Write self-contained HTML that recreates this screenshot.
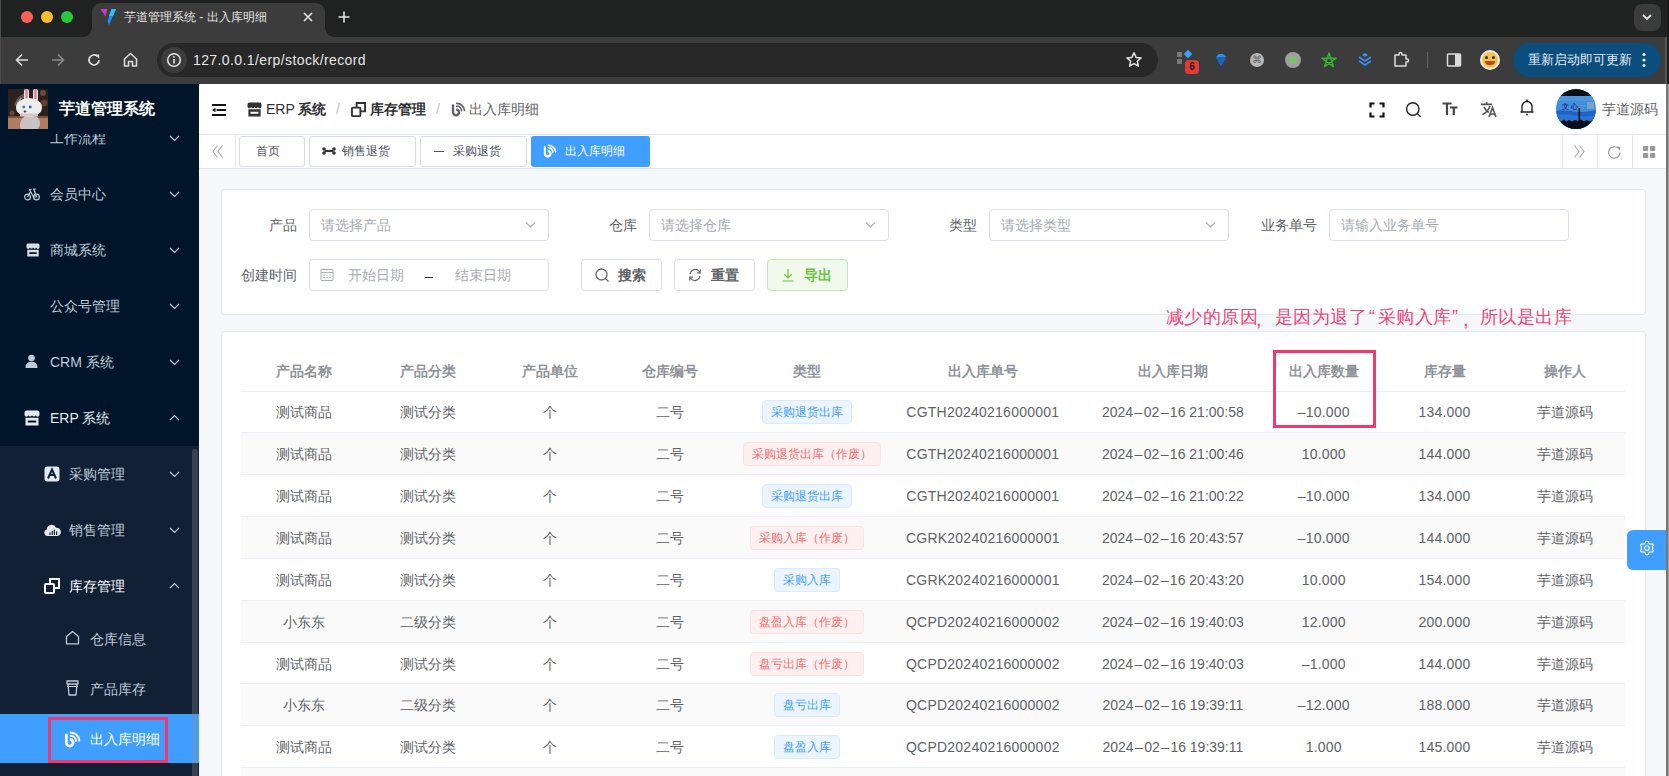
<!DOCTYPE html>
<html><head><meta charset="utf-8">
<style>
*{box-sizing:border-box;margin:0;padding:0}
html,body{width:1669px;height:776px;overflow:hidden;background:#f5f7f9;font-family:"Liberation Sans",sans-serif}
.abs{position:absolute}
/* browser chrome */
#tabstrip{position:absolute;left:0;top:0;width:1669px;height:37px;background:#202121}
#toolbar{position:absolute;left:0;top:37px;width:1669px;height:47px;background:#3c3c3c}
/* sidebar */
#side{position:absolute;left:0;top:84px;width:200px;height:692px;background:#001529;overflow:hidden}
.mi{position:absolute;left:0;width:200px;height:56px;color:#bfcbd9;font-size:14px;line-height:56px}
/* header */
#hdr{position:absolute;left:200px;top:84px;width:1466px;height:50px;background:#fff;border-bottom:1px solid #e4e7ed}
#tags{position:absolute;left:200px;top:134px;width:1466px;height:35px;background:#fff;border-bottom:1px solid #e4e7ed}
#edge{position:absolute;left:1666px;top:84px;width:3px;height:692px;background:#3a3a3a}
</style></head>
<body>
<div id="tabstrip">
  <div class="abs" style="left:21px;top:11px;width:12px;height:12px;border-radius:50%;background:#fe5f57"></div>
  <div class="abs" style="left:41px;top:11px;width:12px;height:12px;border-radius:50%;background:#febc2e"></div>
  <div class="abs" style="left:61px;top:11px;width:12px;height:12px;border-radius:50%;background:#28c840"></div>
  <div class="abs" style="left:92px;top:3px;width:233px;height:34px;background:#3c3c3c;border-radius:9px 9px 0 0"></div><div class="abs" style="left:83px;top:28px;width:9px;height:9px;background:radial-gradient(circle at 0 0,#202121 8.5px,#3c3c3c 9px)"></div><div class="abs" style="left:325px;top:28px;width:9px;height:9px;background:radial-gradient(circle at 100% 0,#202121 8.5px,#3c3c3c 9px)"></div>
  <svg class="abs" style="left:99px;top:8px" width="18" height="18" viewBox="0 0 18 18"><path d="M1.5 1 H8.5 L6.5 8.5 Z" fill="#c63bc4"/><path d="M12.5 1 H17 L10 17 L8.5 13 Z" fill="#1e8ff0"/><path d="M12.5 1 H17 L14 8 H10 Z" fill="#27c3f5"/></svg>
  <div class="abs" style="left:124px;top:9px;font-size:12px;line-height:16px;color:#e6e6e6">芋道管理系统 - 出入库明细</div>
  <svg class="abs" style="left:302px;top:11px" width="12" height="12" viewBox="0 0 12 12"><path d="M2 2 L10 10 M10 2 L2 10" stroke="#e6e6e6" stroke-width="1.6"/></svg>
  <svg class="abs" style="left:337px;top:10px" width="14" height="14" viewBox="0 0 14 14"><path d="M7 1.5 V12.5 M1.5 7 H12.5" stroke="#e6e6e6" stroke-width="1.6"/></svg>
  <div class="abs" style="left:1634px;top:4px;width:27px;height:27px;border-radius:8px;background:#3c3c3c"></div>
  <svg class="abs" style="left:1641px;top:12px" width="12" height="10" viewBox="0 0 12 10"><path d="M2 3 L6 7 L10 3" stroke="#e6e6e6" stroke-width="1.8" fill="none"/></svg>
</div>
<div id="toolbar">
  <svg class="abs" style="left:14px;top:15px" width="16" height="16" viewBox="0 0 16 16"><path d="M14 8 H2.5 M8 2.5 L2.5 8 L8 13.5" stroke="#dcdcdc" stroke-width="1.6" fill="none"/></svg>
  <svg class="abs" style="left:50px;top:15px" width="16" height="16" viewBox="0 0 16 16"><path d="M2 8 H13.5 M8 2.5 L13.5 8 L8 13.5" stroke="#8a8a8a" stroke-width="1.6" fill="none"/></svg>
  <svg class="abs" style="left:86px;top:15px" width="16" height="16" viewBox="0 0 16 16"><path d="M13 8 A5 5 0 1 1 11.5 4.4" stroke="#dcdcdc" stroke-width="1.7" fill="none"/><path d="M9 2.5 L13.2 2.5 L13.2 6.7 Z" fill="#dcdcdc"/></svg>
  <svg class="abs" style="left:122px;top:14px" width="17" height="17" viewBox="0 0 17 17"><path d="M2.5 8 L8.5 2.5 L14.5 8 V15 H10.5 V10.5 H6.5 V15 H2.5 Z" stroke="#dcdcdc" stroke-width="1.6" fill="none" stroke-linejoin="round"/></svg>
  <div class="abs" style="left:157px;top:6px;width:1001px;height:34px;border-radius:17px;background:#282828"></div>
  <div class="abs" style="left:161px;top:10px;width:26px;height:26px;border-radius:50%;background:#3c3c3c"></div>
  <svg class="abs" style="left:166px;top:15px" width="16" height="16" viewBox="0 0 16 16"><circle cx="8" cy="8" r="6.3" stroke="#e6e6e6" stroke-width="1.5" fill="none"/><path d="M8 7 V11.5" stroke="#e6e6e6" stroke-width="1.6"/><circle cx="8" cy="4.8" r="0.9" fill="#e6e6e6"/></svg>
  <div class="abs" style="left:193px;top:14px;font-size:14px;line-height:18px;color:#e6e6e6;letter-spacing:0.4px">127.0.0.1/erp/stock/record</div>
  <svg class="abs" style="left:1125px;top:14px" width="18" height="18" viewBox="0 0 18 18"><path d="M9 1.8 L11.1 6.4 L16.1 6.9 L12.3 10.2 L13.4 15.2 L9 12.6 L4.6 15.2 L5.7 10.2 L1.9 6.9 L6.9 6.4 Z" stroke="#e6e6e6" stroke-width="1.5" fill="none" stroke-linejoin="round"/></svg>
  <!-- extensions -->
  <div class="abs" style="left:1177px;top:15px;width:5px;height:5px;background:#777"></div>
  <div class="abs" style="left:1177px;top:22px;width:5px;height:5px;background:#777"></div>
  <div class="abs" style="left:1185px;top:14px;width:6px;height:6px;background:#3aa0ff;transform:rotate(45deg)"></div>
  <div class="abs" style="left:1185px;top:23px;width:14px;height:14px;border-radius:4px;background:#e53935;color:#222;font-size:10px;line-height:14px;text-align:center;font-weight:bold">6</div>
  <svg class="abs" style="left:1213px;top:15px" width="16" height="16" viewBox="0 0 16 16"><path d="M3 5 L6 2 H10 L13 5 L8 14 Z" fill="#2f8ff0"/><path d="M3 5 H13 L8 14 Z" fill="#1565c0"/></svg>
  <div class="abs" style="left:1250px;top:16px;width:14px;height:14px;border-radius:50%;background:#b8b8b8;color:#666;font-size:10px;line-height:14px;text-align:center">⌘</div>
  <div class="abs" style="left:1285px;top:15px;width:16px;height:16px;border-radius:50%;background:#9e9e9e"></div>
  <div class="abs" style="left:1289px;top:19px;width:8px;height:8px;border-radius:50%;background:#7cc26a"></div>
  <svg class="abs" style="left:1320px;top:14px" width="18" height="18" viewBox="0 0 18 18"><path d="M9.00 2.00 L13.41 15.57 L1.87 7.18 L16.13 7.18 L4.59 15.57 L9.00 2.00 Z" stroke="#2fb52f" stroke-width="1.5" fill="none" stroke-linejoin="round"/></svg>
  <svg class="abs" style="left:1356px;top:15px" width="18" height="16" viewBox="0 0 18 16"><path d="M3 5 L9 9 L15 5 M3 9 L9 13 L15 9" stroke="#3b8cf5" stroke-width="1.7" fill="none"/><path d="M6 3 L9 1 L12 3 L9 5 Z" fill="#3b8cf5"/></svg>
  <svg class="abs" style="left:1392px;top:14px" width="18" height="18" viewBox="0 0 18 18"><path d="M3 4 H7 V3 A1.5 1.5 0 0 1 10 3 V4 H14 V8 H15 A1.5 1.5 0 0 1 15 11 H14 V15 H3 Z" stroke="#dcdcdc" stroke-width="1.5" fill="none" stroke-linejoin="round"/></svg>
  <div class="abs" style="left:1427px;top:15px;width:1px;height:16px;background:#666"></div>
  <svg class="abs" style="left:1446px;top:15px" width="16" height="16" viewBox="0 0 16 16"><rect x="1.5" y="2" width="13" height="12" rx="1" stroke="#dcdcdc" stroke-width="1.5" fill="none"/><rect x="9" y="2" width="5.5" height="12" fill="#dcdcdc"/></svg>
  <div class="abs" style="left:1480px;top:13px;width:20px;height:20px;border-radius:50%;background:#f0f0f0"></div>
  <div class="abs" style="left:1482px;top:15px;width:16px;height:16px;border-radius:50%;background:#f3c24a"></div><div class="abs" style="left:1485px;top:24px;width:10px;height:4px;border-radius:0 0 5px 5px;background:#b44a2a"></div><div class="abs" style="left:1485px;top:19px;width:3px;height:3px;border-radius:50%;background:#333"></div><div class="abs" style="left:1492px;top:19px;width:3px;height:3px;border-radius:50%;background:#333"></div>
  <div class="abs" style="left:1513px;top:6px;width:148px;height:34px;border-radius:17px;background:#0b4d7d"></div>
  <div class="abs" style="left:1528px;top:14px;font-size:13px;line-height:18px;color:#e8eef5">重新启动即可更新</div>
  <svg class="abs" style="left:1640px;top:14px" width="8" height="18" viewBox="0 0 8 18"><circle cx="4" cy="3.5" r="1.6" fill="#e8eef5"/><circle cx="4" cy="9" r="1.6" fill="#e8eef5"/><circle cx="4" cy="14.5" r="1.6" fill="#e8eef5"/></svg>
</div>


<div class="abs" style="left:199px;top:169px;width:1467px;height:607px;background:#f5f7f9"></div>
<div class="abs" style="left:221px;top:189px;width:1425px;height:126px;background:#fff;border:1px solid #e4e7ed;border-radius:4px"></div>
<div class="abs" style="left:-3px;top:215.0px;width:300px;text-align:right;font-size:14px;line-height:20px;color:#606266;font-weight:normal;white-space:nowrap;">产品</div>
<div class="abs" style="left:309px;top:209px;width:240px;height:32px;background:#fff;border:1px solid #dcdfe6;border-radius:4px"></div>
<div class="abs" style="left:321px;top:215.0px;font-size:14px;line-height:20px;color:#a8abb2;font-weight:normal;white-space:nowrap;">请选择产品</div>
<svg class="abs" style="left:525px;top:221px" width="11" height="8" viewBox="0 0 11 8"><path d="M1 1.5 L5.5 6 L10 1.5" stroke="#a8abb2" stroke-width="1.1" fill="none"/></svg>
<div class="abs" style="left:337px;top:215.0px;width:300px;text-align:right;font-size:14px;line-height:20px;color:#606266;font-weight:normal;white-space:nowrap;">仓库</div>
<div class="abs" style="left:649px;top:209px;width:240px;height:32px;background:#fff;border:1px solid #dcdfe6;border-radius:4px"></div>
<div class="abs" style="left:661px;top:215.0px;font-size:14px;line-height:20px;color:#a8abb2;font-weight:normal;white-space:nowrap;">请选择仓库</div>
<svg class="abs" style="left:865px;top:221px" width="11" height="8" viewBox="0 0 11 8"><path d="M1 1.5 L5.5 6 L10 1.5" stroke="#a8abb2" stroke-width="1.1" fill="none"/></svg>
<div class="abs" style="left:677px;top:215.0px;width:300px;text-align:right;font-size:14px;line-height:20px;color:#606266;font-weight:normal;white-space:nowrap;">类型</div>
<div class="abs" style="left:989px;top:209px;width:240px;height:32px;background:#fff;border:1px solid #dcdfe6;border-radius:4px"></div>
<div class="abs" style="left:1001px;top:215.0px;font-size:14px;line-height:20px;color:#a8abb2;font-weight:normal;white-space:nowrap;">请选择类型</div>
<svg class="abs" style="left:1205px;top:221px" width="11" height="8" viewBox="0 0 11 8"><path d="M1 1.5 L5.5 6 L10 1.5" stroke="#a8abb2" stroke-width="1.1" fill="none"/></svg>
<div class="abs" style="left:1017px;top:215.0px;width:300px;text-align:right;font-size:14px;line-height:20px;color:#606266;font-weight:normal;white-space:nowrap;">业务单号</div>
<div class="abs" style="left:1329px;top:209px;width:240px;height:32px;background:#fff;border:1px solid #dcdfe6;border-radius:4px"></div>
<div class="abs" style="left:1341px;top:215.0px;font-size:14px;line-height:20px;color:#a8abb2;font-weight:normal;white-space:nowrap;">请输入业务单号</div>
<div class="abs" style="left:-3px;top:265.0px;width:300px;text-align:right;font-size:14px;line-height:20px;color:#606266;font-weight:normal;white-space:nowrap;">创建时间</div>
<div class="abs" style="left:309px;top:259px;width:240px;height:32px;background:#fff;border:1px solid #dcdfe6;border-radius:4px"></div>
<svg class="abs" style="left:320px;top:268px" width="14" height="14" viewBox="0 0 14 14"><rect x="1" y="1.5" width="12" height="11" rx="1" stroke="#a8abb2" stroke-width="1" fill="none"/><path d="M1 4.5 H13 M3.5 7 H5 M6.3 7 H7.8 M9 7 H10.5 M3.5 9.5 H5 M6.3 9.5 H7.8 M9 9.5 H10.5" stroke="#a8abb2" stroke-width="0.9"/></svg>
<div class="abs" style="left:348px;top:265.0px;font-size:14px;line-height:20px;color:#a8abb2;font-weight:normal;white-space:nowrap;">开始日期</div>
<div class="abs" style="left:425px;top:266.0px;font-size:14px;line-height:20px;color:#303133;font-weight:normal;white-space:nowrap;">–</div>
<div class="abs" style="left:455px;top:265.0px;font-size:14px;line-height:20px;color:#a8abb2;font-weight:normal;white-space:nowrap;">结束日期</div>
<div class="abs" style="left:581px;top:259px;width:81px;height:32px;background:#fff;border:1px solid #dcdfe6;border-radius:4px"></div>
<div class="abs" style="left:618px;top:265.0px;font-size:14px;line-height:20px;color:#606266;font-weight:bold;white-space:nowrap;">搜索</div>
<svg class="abs" style="left:595px;top:268px" width="14" height="14" viewBox="0 0 14 14"><circle cx="6.5" cy="6.5" r="5.5" stroke="#606266" stroke-width="1.3" fill="none"/><path d="M10.5 10.5 L13.5 13.5" stroke="#606266" stroke-width="1.3"/></svg>
<div class="abs" style="left:674px;top:259px;width:81px;height:32px;background:#fff;border:1px solid #dcdfe6;border-radius:4px"></div>
<div class="abs" style="left:711px;top:265.0px;font-size:14px;line-height:20px;color:#606266;font-weight:bold;white-space:nowrap;">重置</div>
<svg class="abs" style="left:688px;top:268px" width="14" height="14" viewBox="0 0 14 14"><path d="M2.2 6 A5 5 0 0 1 11.5 4 M11.8 8 A5 5 0 0 1 2.5 10" stroke="#606266" stroke-width="1.2" fill="none"/><path d="M12.3 1.5 V4.8 H9" stroke="#606266" stroke-width="1.2" fill="none"/><path d="M1.7 12.5 V9.2 H5" stroke="#606266" stroke-width="1.2" fill="none"/></svg>
<div class="abs" style="left:767px;top:259px;width:81px;height:32px;background:#f0f9eb;border:1px solid #c2e7b0;border-radius:4px"></div>
<div class="abs" style="left:804px;top:265.0px;font-size:14px;line-height:20px;color:#67c23a;font-weight:bold;white-space:nowrap;">导出</div>
<svg class="abs" style="left:781px;top:268px" width="14" height="14" viewBox="0 0 14 14"><path d="M7 1 V10 M3.2 6.3 L7 10 L10.8 6.3 M1.5 13 H12.5" stroke="#67c23a" stroke-width="1.2" fill="none"/></svg>
<div class="abs" style="left:1166px;top:305.0px;font-size:18px;line-height:24px;color:#ee4379;font-weight:normal;white-space:nowrap;letter-spacing:0.4px">减少的原因</div>
<div class="abs" style="left:1256px;top:307.0px;font-size:20px;line-height:24px;color:#ee4379;font-weight:normal;white-space:nowrap;">,</div>
<div class="abs" style="left:1275px;top:305.0px;font-size:18px;line-height:24px;color:#ee4379;font-weight:normal;white-space:nowrap;letter-spacing:0.4px">是因为退了</div>
<div class="abs" style="left:1369px;top:305.0px;font-size:18px;line-height:24px;color:#ee4379;font-weight:normal;white-space:nowrap;">“</div>
<div class="abs" style="left:1378px;top:305.0px;font-size:18px;line-height:24px;color:#ee4379;font-weight:normal;white-space:nowrap;letter-spacing:0.4px">采购入库</div>
<div class="abs" style="left:1452px;top:305.0px;font-size:18px;line-height:24px;color:#ee4379;font-weight:normal;white-space:nowrap;">”</div>
<div class="abs" style="left:1463px;top:307.0px;font-size:20px;line-height:24px;color:#ee4379;font-weight:normal;white-space:nowrap;">,</div>
<div class="abs" style="left:1480px;top:305.0px;font-size:18px;line-height:24px;color:#ee4379;font-weight:normal;white-space:nowrap;letter-spacing:0.4px">所以是出库</div>
<div class="abs" style="left:221px;top:331px;width:1425px;height:460px;background:#fff;border:1px solid #e4e7ed;border-radius:4px"></div>
<div class="abs" style="left:153.8px;top:361.0px;width:300px;text-align:center;font-size:14px;line-height:20px;color:#909399;font-weight:bold;white-space:nowrap;">产品名称</div>
<div class="abs" style="left:278.2px;top:361.0px;width:300px;text-align:center;font-size:14px;line-height:20px;color:#909399;font-weight:bold;white-space:nowrap;">产品分类</div>
<div class="abs" style="left:399.6px;top:361.0px;width:300px;text-align:center;font-size:14px;line-height:20px;color:#909399;font-weight:bold;white-space:nowrap;">产品单位</div>
<div class="abs" style="left:520.4px;top:361.0px;width:300px;text-align:center;font-size:14px;line-height:20px;color:#909399;font-weight:bold;white-space:nowrap;">仓库编号</div>
<div class="abs" style="left:657.2px;top:361.0px;width:300px;text-align:center;font-size:14px;line-height:20px;color:#909399;font-weight:bold;white-space:nowrap;">类型</div>
<div class="abs" style="left:832.8px;top:361.0px;width:300px;text-align:center;font-size:14px;line-height:20px;color:#909399;font-weight:bold;white-space:nowrap;">出入库单号</div>
<div class="abs" style="left:1022.9000000000001px;top:361.0px;width:300px;text-align:center;font-size:14px;line-height:20px;color:#909399;font-weight:bold;white-space:nowrap;">出入库日期</div>
<div class="abs" style="left:1173.7px;top:361.0px;width:300px;text-align:center;font-size:14px;line-height:20px;color:#909399;font-weight:bold;white-space:nowrap;">出入库数量</div>
<div class="abs" style="left:1294.5px;top:361.0px;width:300px;text-align:center;font-size:14px;line-height:20px;color:#909399;font-weight:bold;white-space:nowrap;">库存量</div>
<div class="abs" style="left:1414.9px;top:361.0px;width:300px;text-align:center;font-size:14px;line-height:20px;color:#909399;font-weight:bold;white-space:nowrap;">操作人</div>
<div class="abs" style="left:241px;top:390.5px;width:1384px;height:1px;background:#ebeef5"></div>
<div class="abs" style="left:241px;top:432.35px;width:1384px;height:1px;background:#ebeef5"></div>
<div class="abs" style="left:153.8px;top:402.425px;width:300px;text-align:center;font-size:14px;line-height:20px;color:#606266;font-weight:normal;white-space:nowrap;">测试商品</div>
<div class="abs" style="left:278.2px;top:402.425px;width:300px;text-align:center;font-size:14px;line-height:20px;color:#606266;font-weight:normal;white-space:nowrap;">测试分类</div>
<div class="abs" style="left:399.6px;top:402.425px;width:300px;text-align:center;font-size:14px;line-height:20px;color:#606266;font-weight:normal;white-space:nowrap;">个</div>
<div class="abs" style="left:520.4px;top:402.425px;width:300px;text-align:center;font-size:14px;line-height:20px;color:#606266;font-weight:normal;white-space:nowrap;">二号</div>
<div class="abs" style="left:762.2px;top:400.425px;width:90px;height:24px;background:#ecf5ff;border:1px solid #d9ecff;border-radius:4px;color:#409eff;font-size:12px;line-height:22px;text-align:center;white-space:nowrap">采购退货出库</div>
<div class="abs" style="left:832.8px;top:402.425px;width:300px;text-align:center;font-size:14px;line-height:20px;color:#606266;font-weight:normal;white-space:nowrap;letter-spacing:0.24px">CGTH20240216000001</div>
<div class="abs" style="left:1022.9000000000001px;top:402.425px;width:300px;text-align:center;font-size:14px;line-height:20px;color:#606266;font-weight:normal;white-space:nowrap;">2024<span style="margin:0 1.4px">–</span>02<span style="margin:0 1.4px">–</span>16 21:00:58</div>
<div class="abs" style="left:1173.7px;top:402.425px;width:300px;text-align:center;font-size:14px;line-height:20px;color:#606266;font-weight:normal;white-space:nowrap;letter-spacing:0.2px">–10.000</div>
<div class="abs" style="left:1294.5px;top:402.425px;width:300px;text-align:center;font-size:14px;line-height:20px;color:#606266;font-weight:normal;white-space:nowrap;letter-spacing:0.2px">134.000</div>
<div class="abs" style="left:1414.9px;top:402.425px;width:300px;text-align:center;font-size:14px;line-height:20px;color:#606266;font-weight:normal;white-space:nowrap;">芋道源码</div>
<div class="abs" style="left:241px;top:433.35px;width:1384px;height:40.85px;background:#fafafa"></div>
<div class="abs" style="left:241px;top:474.20000000000005px;width:1384px;height:1px;background:#ebeef5"></div>
<div class="abs" style="left:153.8px;top:444.27500000000003px;width:300px;text-align:center;font-size:14px;line-height:20px;color:#606266;font-weight:normal;white-space:nowrap;">测试商品</div>
<div class="abs" style="left:278.2px;top:444.27500000000003px;width:300px;text-align:center;font-size:14px;line-height:20px;color:#606266;font-weight:normal;white-space:nowrap;">测试分类</div>
<div class="abs" style="left:399.6px;top:444.27500000000003px;width:300px;text-align:center;font-size:14px;line-height:20px;color:#606266;font-weight:normal;white-space:nowrap;">个</div>
<div class="abs" style="left:520.4px;top:444.27500000000003px;width:300px;text-align:center;font-size:14px;line-height:20px;color:#606266;font-weight:normal;white-space:nowrap;">二号</div>
<div class="abs" style="left:743.4px;top:442.27500000000003px;width:138px;height:24px;background:#fef0f0;border:1px solid #fde2e2;border-radius:4px;color:#f56c6c;font-size:12px;line-height:22px;text-align:center;white-space:nowrap">采购退货出库（作废）</div>
<div class="abs" style="left:832.8px;top:444.27500000000003px;width:300px;text-align:center;font-size:14px;line-height:20px;color:#606266;font-weight:normal;white-space:nowrap;letter-spacing:0.24px">CGTH20240216000001</div>
<div class="abs" style="left:1022.9000000000001px;top:444.27500000000003px;width:300px;text-align:center;font-size:14px;line-height:20px;color:#606266;font-weight:normal;white-space:nowrap;">2024<span style="margin:0 1.4px">–</span>02<span style="margin:0 1.4px">–</span>16 21:00:46</div>
<div class="abs" style="left:1173.7px;top:444.27500000000003px;width:300px;text-align:center;font-size:14px;line-height:20px;color:#606266;font-weight:normal;white-space:nowrap;letter-spacing:0.2px">10.000</div>
<div class="abs" style="left:1294.5px;top:444.27500000000003px;width:300px;text-align:center;font-size:14px;line-height:20px;color:#606266;font-weight:normal;white-space:nowrap;letter-spacing:0.2px">144.000</div>
<div class="abs" style="left:1414.9px;top:444.27500000000003px;width:300px;text-align:center;font-size:14px;line-height:20px;color:#606266;font-weight:normal;white-space:nowrap;">芋道源码</div>
<div class="abs" style="left:241px;top:516.05px;width:1384px;height:1px;background:#ebeef5"></div>
<div class="abs" style="left:153.8px;top:486.125px;width:300px;text-align:center;font-size:14px;line-height:20px;color:#606266;font-weight:normal;white-space:nowrap;">测试商品</div>
<div class="abs" style="left:278.2px;top:486.125px;width:300px;text-align:center;font-size:14px;line-height:20px;color:#606266;font-weight:normal;white-space:nowrap;">测试分类</div>
<div class="abs" style="left:399.6px;top:486.125px;width:300px;text-align:center;font-size:14px;line-height:20px;color:#606266;font-weight:normal;white-space:nowrap;">个</div>
<div class="abs" style="left:520.4px;top:486.125px;width:300px;text-align:center;font-size:14px;line-height:20px;color:#606266;font-weight:normal;white-space:nowrap;">二号</div>
<div class="abs" style="left:762.2px;top:484.125px;width:90px;height:24px;background:#ecf5ff;border:1px solid #d9ecff;border-radius:4px;color:#409eff;font-size:12px;line-height:22px;text-align:center;white-space:nowrap">采购退货出库</div>
<div class="abs" style="left:832.8px;top:486.125px;width:300px;text-align:center;font-size:14px;line-height:20px;color:#606266;font-weight:normal;white-space:nowrap;letter-spacing:0.24px">CGTH20240216000001</div>
<div class="abs" style="left:1022.9000000000001px;top:486.125px;width:300px;text-align:center;font-size:14px;line-height:20px;color:#606266;font-weight:normal;white-space:nowrap;">2024<span style="margin:0 1.4px">–</span>02<span style="margin:0 1.4px">–</span>16 21:00:22</div>
<div class="abs" style="left:1173.7px;top:486.125px;width:300px;text-align:center;font-size:14px;line-height:20px;color:#606266;font-weight:normal;white-space:nowrap;letter-spacing:0.2px">–10.000</div>
<div class="abs" style="left:1294.5px;top:486.125px;width:300px;text-align:center;font-size:14px;line-height:20px;color:#606266;font-weight:normal;white-space:nowrap;letter-spacing:0.2px">134.000</div>
<div class="abs" style="left:1414.9px;top:486.125px;width:300px;text-align:center;font-size:14px;line-height:20px;color:#606266;font-weight:normal;white-space:nowrap;">芋道源码</div>
<div class="abs" style="left:241px;top:517.05px;width:1384px;height:40.85px;background:#fafafa"></div>
<div class="abs" style="left:241px;top:557.9px;width:1384px;height:1px;background:#ebeef5"></div>
<div class="abs" style="left:153.8px;top:527.9749999999999px;width:300px;text-align:center;font-size:14px;line-height:20px;color:#606266;font-weight:normal;white-space:nowrap;">测试商品</div>
<div class="abs" style="left:278.2px;top:527.9749999999999px;width:300px;text-align:center;font-size:14px;line-height:20px;color:#606266;font-weight:normal;white-space:nowrap;">测试分类</div>
<div class="abs" style="left:399.6px;top:527.9749999999999px;width:300px;text-align:center;font-size:14px;line-height:20px;color:#606266;font-weight:normal;white-space:nowrap;">个</div>
<div class="abs" style="left:520.4px;top:527.9749999999999px;width:300px;text-align:center;font-size:14px;line-height:20px;color:#606266;font-weight:normal;white-space:nowrap;">二号</div>
<div class="abs" style="left:750.2px;top:525.9749999999999px;width:114px;height:24px;background:#fef0f0;border:1px solid #fde2e2;border-radius:4px;color:#f56c6c;font-size:12px;line-height:22px;text-align:center;white-space:nowrap">采购入库（作废）</div>
<div class="abs" style="left:832.8px;top:527.9749999999999px;width:300px;text-align:center;font-size:14px;line-height:20px;color:#606266;font-weight:normal;white-space:nowrap;letter-spacing:0.24px">CGRK20240216000001</div>
<div class="abs" style="left:1022.9000000000001px;top:527.9749999999999px;width:300px;text-align:center;font-size:14px;line-height:20px;color:#606266;font-weight:normal;white-space:nowrap;">2024<span style="margin:0 1.4px">–</span>02<span style="margin:0 1.4px">–</span>16 20:43:57</div>
<div class="abs" style="left:1173.7px;top:527.9749999999999px;width:300px;text-align:center;font-size:14px;line-height:20px;color:#606266;font-weight:normal;white-space:nowrap;letter-spacing:0.2px">–10.000</div>
<div class="abs" style="left:1294.5px;top:527.9749999999999px;width:300px;text-align:center;font-size:14px;line-height:20px;color:#606266;font-weight:normal;white-space:nowrap;letter-spacing:0.2px">144.000</div>
<div class="abs" style="left:1414.9px;top:527.9749999999999px;width:300px;text-align:center;font-size:14px;line-height:20px;color:#606266;font-weight:normal;white-space:nowrap;">芋道源码</div>
<div class="abs" style="left:241px;top:599.75px;width:1384px;height:1px;background:#ebeef5"></div>
<div class="abs" style="left:153.8px;top:569.8249999999999px;width:300px;text-align:center;font-size:14px;line-height:20px;color:#606266;font-weight:normal;white-space:nowrap;">测试商品</div>
<div class="abs" style="left:278.2px;top:569.8249999999999px;width:300px;text-align:center;font-size:14px;line-height:20px;color:#606266;font-weight:normal;white-space:nowrap;">测试分类</div>
<div class="abs" style="left:399.6px;top:569.8249999999999px;width:300px;text-align:center;font-size:14px;line-height:20px;color:#606266;font-weight:normal;white-space:nowrap;">个</div>
<div class="abs" style="left:520.4px;top:569.8249999999999px;width:300px;text-align:center;font-size:14px;line-height:20px;color:#606266;font-weight:normal;white-space:nowrap;">二号</div>
<div class="abs" style="left:774.2px;top:567.8249999999999px;width:66px;height:24px;background:#ecf5ff;border:1px solid #d9ecff;border-radius:4px;color:#409eff;font-size:12px;line-height:22px;text-align:center;white-space:nowrap">采购入库</div>
<div class="abs" style="left:832.8px;top:569.8249999999999px;width:300px;text-align:center;font-size:14px;line-height:20px;color:#606266;font-weight:normal;white-space:nowrap;letter-spacing:0.24px">CGRK20240216000001</div>
<div class="abs" style="left:1022.9000000000001px;top:569.8249999999999px;width:300px;text-align:center;font-size:14px;line-height:20px;color:#606266;font-weight:normal;white-space:nowrap;">2024<span style="margin:0 1.4px">–</span>02<span style="margin:0 1.4px">–</span>16 20:43:20</div>
<div class="abs" style="left:1173.7px;top:569.8249999999999px;width:300px;text-align:center;font-size:14px;line-height:20px;color:#606266;font-weight:normal;white-space:nowrap;letter-spacing:0.2px">10.000</div>
<div class="abs" style="left:1294.5px;top:569.8249999999999px;width:300px;text-align:center;font-size:14px;line-height:20px;color:#606266;font-weight:normal;white-space:nowrap;letter-spacing:0.2px">154.000</div>
<div class="abs" style="left:1414.9px;top:569.8249999999999px;width:300px;text-align:center;font-size:14px;line-height:20px;color:#606266;font-weight:normal;white-space:nowrap;">芋道源码</div>
<div class="abs" style="left:241px;top:600.75px;width:1384px;height:40.85px;background:#fafafa"></div>
<div class="abs" style="left:241px;top:641.6px;width:1384px;height:1px;background:#ebeef5"></div>
<div class="abs" style="left:153.8px;top:611.675px;width:300px;text-align:center;font-size:14px;line-height:20px;color:#606266;font-weight:normal;white-space:nowrap;">小东东</div>
<div class="abs" style="left:278.2px;top:611.675px;width:300px;text-align:center;font-size:14px;line-height:20px;color:#606266;font-weight:normal;white-space:nowrap;">二级分类</div>
<div class="abs" style="left:399.6px;top:611.675px;width:300px;text-align:center;font-size:14px;line-height:20px;color:#606266;font-weight:normal;white-space:nowrap;">个</div>
<div class="abs" style="left:520.4px;top:611.675px;width:300px;text-align:center;font-size:14px;line-height:20px;color:#606266;font-weight:normal;white-space:nowrap;">二号</div>
<div class="abs" style="left:750.2px;top:609.675px;width:114px;height:24px;background:#fef0f0;border:1px solid #fde2e2;border-radius:4px;color:#f56c6c;font-size:12px;line-height:22px;text-align:center;white-space:nowrap">盘盈入库（作废）</div>
<div class="abs" style="left:832.8px;top:611.675px;width:300px;text-align:center;font-size:14px;line-height:20px;color:#606266;font-weight:normal;white-space:nowrap;letter-spacing:0.24px">QCPD20240216000002</div>
<div class="abs" style="left:1022.9000000000001px;top:611.675px;width:300px;text-align:center;font-size:14px;line-height:20px;color:#606266;font-weight:normal;white-space:nowrap;">2024<span style="margin:0 1.4px">–</span>02<span style="margin:0 1.4px">–</span>16 19:40:03</div>
<div class="abs" style="left:1173.7px;top:611.675px;width:300px;text-align:center;font-size:14px;line-height:20px;color:#606266;font-weight:normal;white-space:nowrap;letter-spacing:0.2px">12.000</div>
<div class="abs" style="left:1294.5px;top:611.675px;width:300px;text-align:center;font-size:14px;line-height:20px;color:#606266;font-weight:normal;white-space:nowrap;letter-spacing:0.2px">200.000</div>
<div class="abs" style="left:1414.9px;top:611.675px;width:300px;text-align:center;font-size:14px;line-height:20px;color:#606266;font-weight:normal;white-space:nowrap;">芋道源码</div>
<div class="abs" style="left:241px;top:683.45px;width:1384px;height:1px;background:#ebeef5"></div>
<div class="abs" style="left:153.8px;top:653.525px;width:300px;text-align:center;font-size:14px;line-height:20px;color:#606266;font-weight:normal;white-space:nowrap;">测试商品</div>
<div class="abs" style="left:278.2px;top:653.525px;width:300px;text-align:center;font-size:14px;line-height:20px;color:#606266;font-weight:normal;white-space:nowrap;">测试分类</div>
<div class="abs" style="left:399.6px;top:653.525px;width:300px;text-align:center;font-size:14px;line-height:20px;color:#606266;font-weight:normal;white-space:nowrap;">个</div>
<div class="abs" style="left:520.4px;top:653.525px;width:300px;text-align:center;font-size:14px;line-height:20px;color:#606266;font-weight:normal;white-space:nowrap;">二号</div>
<div class="abs" style="left:750.2px;top:651.525px;width:114px;height:24px;background:#fef0f0;border:1px solid #fde2e2;border-radius:4px;color:#f56c6c;font-size:12px;line-height:22px;text-align:center;white-space:nowrap">盘亏出库（作废）</div>
<div class="abs" style="left:832.8px;top:653.525px;width:300px;text-align:center;font-size:14px;line-height:20px;color:#606266;font-weight:normal;white-space:nowrap;letter-spacing:0.24px">QCPD20240216000002</div>
<div class="abs" style="left:1022.9000000000001px;top:653.525px;width:300px;text-align:center;font-size:14px;line-height:20px;color:#606266;font-weight:normal;white-space:nowrap;">2024<span style="margin:0 1.4px">–</span>02<span style="margin:0 1.4px">–</span>16 19:40:03</div>
<div class="abs" style="left:1173.7px;top:653.525px;width:300px;text-align:center;font-size:14px;line-height:20px;color:#606266;font-weight:normal;white-space:nowrap;letter-spacing:0.2px">–1.000</div>
<div class="abs" style="left:1294.5px;top:653.525px;width:300px;text-align:center;font-size:14px;line-height:20px;color:#606266;font-weight:normal;white-space:nowrap;letter-spacing:0.2px">144.000</div>
<div class="abs" style="left:1414.9px;top:653.525px;width:300px;text-align:center;font-size:14px;line-height:20px;color:#606266;font-weight:normal;white-space:nowrap;">芋道源码</div>
<div class="abs" style="left:241px;top:684.45px;width:1384px;height:40.85px;background:#fafafa"></div>
<div class="abs" style="left:241px;top:725.3000000000001px;width:1384px;height:1px;background:#ebeef5"></div>
<div class="abs" style="left:153.8px;top:695.375px;width:300px;text-align:center;font-size:14px;line-height:20px;color:#606266;font-weight:normal;white-space:nowrap;">小东东</div>
<div class="abs" style="left:278.2px;top:695.375px;width:300px;text-align:center;font-size:14px;line-height:20px;color:#606266;font-weight:normal;white-space:nowrap;">二级分类</div>
<div class="abs" style="left:399.6px;top:695.375px;width:300px;text-align:center;font-size:14px;line-height:20px;color:#606266;font-weight:normal;white-space:nowrap;">个</div>
<div class="abs" style="left:520.4px;top:695.375px;width:300px;text-align:center;font-size:14px;line-height:20px;color:#606266;font-weight:normal;white-space:nowrap;">二号</div>
<div class="abs" style="left:774.2px;top:693.375px;width:66px;height:24px;background:#ecf5ff;border:1px solid #d9ecff;border-radius:4px;color:#409eff;font-size:12px;line-height:22px;text-align:center;white-space:nowrap">盘亏出库</div>
<div class="abs" style="left:832.8px;top:695.375px;width:300px;text-align:center;font-size:14px;line-height:20px;color:#606266;font-weight:normal;white-space:nowrap;letter-spacing:0.24px">QCPD20240216000002</div>
<div class="abs" style="left:1022.9000000000001px;top:695.375px;width:300px;text-align:center;font-size:14px;line-height:20px;color:#606266;font-weight:normal;white-space:nowrap;">2024<span style="margin:0 1.4px">–</span>02<span style="margin:0 1.4px">–</span>16 19:39:11</div>
<div class="abs" style="left:1173.7px;top:695.375px;width:300px;text-align:center;font-size:14px;line-height:20px;color:#606266;font-weight:normal;white-space:nowrap;letter-spacing:0.2px">–12.000</div>
<div class="abs" style="left:1294.5px;top:695.375px;width:300px;text-align:center;font-size:14px;line-height:20px;color:#606266;font-weight:normal;white-space:nowrap;letter-spacing:0.2px">188.000</div>
<div class="abs" style="left:1414.9px;top:695.375px;width:300px;text-align:center;font-size:14px;line-height:20px;color:#606266;font-weight:normal;white-space:nowrap;">芋道源码</div>
<div class="abs" style="left:241px;top:767.15px;width:1384px;height:1px;background:#ebeef5"></div>
<div class="abs" style="left:153.8px;top:737.2249999999999px;width:300px;text-align:center;font-size:14px;line-height:20px;color:#606266;font-weight:normal;white-space:nowrap;">测试商品</div>
<div class="abs" style="left:278.2px;top:737.2249999999999px;width:300px;text-align:center;font-size:14px;line-height:20px;color:#606266;font-weight:normal;white-space:nowrap;">测试分类</div>
<div class="abs" style="left:399.6px;top:737.2249999999999px;width:300px;text-align:center;font-size:14px;line-height:20px;color:#606266;font-weight:normal;white-space:nowrap;">个</div>
<div class="abs" style="left:520.4px;top:737.2249999999999px;width:300px;text-align:center;font-size:14px;line-height:20px;color:#606266;font-weight:normal;white-space:nowrap;">二号</div>
<div class="abs" style="left:774.2px;top:735.2249999999999px;width:66px;height:24px;background:#ecf5ff;border:1px solid #d9ecff;border-radius:4px;color:#409eff;font-size:12px;line-height:22px;text-align:center;white-space:nowrap">盘盈入库</div>
<div class="abs" style="left:832.8px;top:737.2249999999999px;width:300px;text-align:center;font-size:14px;line-height:20px;color:#606266;font-weight:normal;white-space:nowrap;letter-spacing:0.24px">QCPD20240216000002</div>
<div class="abs" style="left:1022.9000000000001px;top:737.2249999999999px;width:300px;text-align:center;font-size:14px;line-height:20px;color:#606266;font-weight:normal;white-space:nowrap;">2024<span style="margin:0 1.4px">–</span>02<span style="margin:0 1.4px">–</span>16 19:39:11</div>
<div class="abs" style="left:1173.7px;top:737.2249999999999px;width:300px;text-align:center;font-size:14px;line-height:20px;color:#606266;font-weight:normal;white-space:nowrap;letter-spacing:0.2px">1.000</div>
<div class="abs" style="left:1294.5px;top:737.2249999999999px;width:300px;text-align:center;font-size:14px;line-height:20px;color:#606266;font-weight:normal;white-space:nowrap;letter-spacing:0.2px">145.000</div>
<div class="abs" style="left:1414.9px;top:737.2249999999999px;width:300px;text-align:center;font-size:14px;line-height:20px;color:#606266;font-weight:normal;white-space:nowrap;">芋道源码</div>
<div class="abs" style="left:241px;top:768.1500000000001px;width:1384px;height:20px;background:#fafafa"></div>
<div class="abs" style="left:1273px;top:350px;width:103px;height:78px;border:3px solid #f2386f"></div>
<div class="abs" style="left:1627px;top:530px;width:42px;height:40px;background:#409eff;border-radius:6px 0 0 6px"></div>
<svg class="abs" style="left:1639px;top:540px" width="16" height="16" viewBox="0 0 16 16"><path d="M8 1.2 L9.6 1.6 L10 3.4 L11.6 4.3 L13.3 3.7 L14.4 5 L13.6 6.6 L13.6 9.4 L14.4 11 L13.3 12.3 L11.6 11.7 L10 12.6 L9.6 14.4 L8 14.8 L6.4 14.4 L6 12.6 L4.4 11.7 L2.7 12.3 L1.6 11 L2.4 9.4 L2.4 6.6 L1.6 5 L2.7 3.7 L4.4 4.3 L6 3.4 L6.4 1.6 Z" stroke="#fff" stroke-width="1.1" fill="none" stroke-linejoin="round"/><circle cx="8" cy="8" r="2.3" stroke="#fff" stroke-width="1.1" fill="none"/></svg>
<div class="abs" style="left:0px;top:84px;width:199px;height:692px;background:#001529"></div>
<div class="abs" style="left:0px;top:446px;width:199px;height:330px;background:#112035"></div>
<div class="abs" style="left:0px;top:714px;width:199px;height:49px;background:#409eff"></div>
<div class="abs" style="left:50px;top:128.0px;font-size:14px;line-height:20px;color:#bfcbd9;font-weight:normal;white-space:nowrap;">工作流程</div>
<svg class="abs" style="left:168.5px;top:135px" width="11" height="7" viewBox="0 0 11 7"><path d="M1 1 L5.5 5.5 L10 1" stroke="#bfcbd9" stroke-width="1.2" fill="none"/></svg>
<div class="abs" style="left:50px;top:184.0px;font-size:14px;line-height:20px;color:#bfcbd9;font-weight:normal;white-space:nowrap;">会员中心</div>
<svg class="abs" style="left:168.5px;top:191px" width="11" height="7" viewBox="0 0 11 7"><path d="M1 1 L5.5 5.5 L10 1" stroke="#bfcbd9" stroke-width="1.2" fill="none"/></svg>
<svg class="abs" style="left:24px;top:187px" width="16" height="14" viewBox="0 0 16 14"><circle cx="3.6" cy="10" r="2.9" stroke="#bfcbd9" stroke-width="1.2" fill="none"/><circle cx="12.4" cy="10" r="2.9" stroke="#bfcbd9" stroke-width="1.2" fill="none"/><path d="M3.6 10 L6.5 4.5 L9.5 10 L12.4 10 L9.8 2 L11.8 2 M6.5 4.5 L5.5 2.5 H7.5" stroke="#bfcbd9" stroke-width="1.2" fill="none"/></svg>
<div class="abs" style="left:50px;top:240.0px;font-size:14px;line-height:20px;color:#bfcbd9;font-weight:normal;white-space:nowrap;">商城系统</div>
<svg class="abs" style="left:168.5px;top:247px" width="11" height="7" viewBox="0 0 11 7"><path d="M1 1 L5.5 5.5 L10 1" stroke="#bfcbd9" stroke-width="1.2" fill="none"/></svg>
<svg class="abs" style="left:26px;top:243px" width="14" height="14" viewBox="0 0 14 14"><path d="M2 0.5 H12 A1.5 1.5 0 0 1 13.5 2 V4.6 A1.7 1.7 0 0 1 10.2 4.6 A1.7 1.7 0 0 1 7 4.6 A1.7 1.7 0 0 1 3.8 4.6 A1.7 1.7 0 0 1 0.5 4.6 V2 A1.5 1.5 0 0 1 2 0.5 Z" fill="#d9dee6"/><path d="M1.3 6.8 H12.7 V13.5 H1.3 Z M3.3 9.2 H10.7 V10.9 H3.3 Z" fill="#d9dee6" fill-rule="evenodd"/></svg>
<div class="abs" style="left:50px;top:296.0px;font-size:14px;line-height:20px;color:#bfcbd9;font-weight:normal;white-space:nowrap;">公众号管理</div>
<svg class="abs" style="left:168.5px;top:303px" width="11" height="7" viewBox="0 0 11 7"><path d="M1 1 L5.5 5.5 L10 1" stroke="#bfcbd9" stroke-width="1.2" fill="none"/></svg>
<div class="abs" style="left:50px;top:352.0px;font-size:14px;line-height:20px;color:#bfcbd9;font-weight:normal;white-space:nowrap;">CRM 系统</div>
<svg class="abs" style="left:168.5px;top:359px" width="11" height="7" viewBox="0 0 11 7"><path d="M1 1 L5.5 5.5 L10 1" stroke="#bfcbd9" stroke-width="1.2" fill="none"/></svg>
<svg class="abs" style="left:25px;top:354px" width="13" height="14" viewBox="0 0 13 14"><circle cx="6.5" cy="4" r="3.3" fill="#bfcbd9"/><path d="M0.5 14 C0.5 9.5 3 7.8 6.5 7.8 C10 7.8 12.5 9.5 12.5 14 Z" fill="#bfcbd9"/></svg>
<div class="abs" style="left:50px;top:408.0px;font-size:14px;line-height:20px;color:#e6e9ee;font-weight:normal;white-space:nowrap;">ERP 系统</div>
<svg class="abs" style="left:168.5px;top:414px" width="11" height="7" viewBox="0 0 11 7"><path d="M1 6 L5.5 1.5 L10 6" stroke="#bfcbd9" stroke-width="1.2" fill="none"/></svg>
<svg class="abs" style="left:24px;top:410px" width="16" height="16" viewBox="0 0 14 14"><path d="M2 0.5 H12 A1.5 1.5 0 0 1 13.5 2 V4.6 A1.7 1.7 0 0 1 10.2 4.6 A1.7 1.7 0 0 1 7 4.6 A1.7 1.7 0 0 1 3.8 4.6 A1.7 1.7 0 0 1 0.5 4.6 V2 A1.5 1.5 0 0 1 2 0.5 Z" fill="#e6e9ee"/><path d="M1.3 6.8 H12.7 V13.5 H1.3 Z M3.3 9.2 H10.7 V10.9 H3.3 Z" fill="#e6e9ee" fill-rule="evenodd"/></svg>
<div class="abs" style="left:69px;top:464.0px;font-size:14px;line-height:20px;color:#bfcbd9;font-weight:normal;white-space:nowrap;">采购管理</div>
<svg class="abs" style="left:168.5px;top:471px" width="11" height="7" viewBox="0 0 11 7"><path d="M1 1 L5.5 5.5 L10 1" stroke="#bfcbd9" stroke-width="1.2" fill="none"/></svg>
<svg class="abs" style="left:44px;top:466px" width="16" height="16" viewBox="0 0 16 16"><rect x="0.5" y="0.5" width="15" height="15" rx="3" fill="#e6e9ee"/><path d="M4 12.5 L8 3.5 L12 12.5 M5.6 9 H10.4" stroke="#112035" stroke-width="2" fill="none"/></svg>
<div class="abs" style="left:69px;top:520.0px;font-size:14px;line-height:20px;color:#bfcbd9;font-weight:normal;white-space:nowrap;">销售管理</div>
<svg class="abs" style="left:168.5px;top:527px" width="11" height="7" viewBox="0 0 11 7"><path d="M1 1 L5.5 5.5 L10 1" stroke="#bfcbd9" stroke-width="1.2" fill="none"/></svg>
<svg class="abs" style="left:44px;top:524px" width="17" height="12" viewBox="0 0 17 12"><path d="M3.5 12 A3.3 3.3 0 0 1 2.8 5.5 A4.8 4.8 0 0 1 12 3.8 A4 4 0 0 1 13.5 12 Z" fill="#e6e9ee"/><path d="M6 11 V8.5 M8.2 11 V7 M10.4 11 V5.8 M12.6 11 V7.6" stroke="#112035" stroke-width="1.2"/></svg>
<div class="abs" style="left:69px;top:576.0px;font-size:14px;line-height:20px;color:#ffffff;font-weight:normal;white-space:nowrap;">库存管理</div>
<svg class="abs" style="left:168.5px;top:582px" width="11" height="7" viewBox="0 0 11 7"><path d="M1 6 L5.5 1.5 L10 6" stroke="#bfcbd9" stroke-width="1.2" fill="none"/></svg>
<svg class="abs" style="left:44px;top:578px" width="16" height="16" viewBox="0 0 16 16"><rect x="1" y="6" width="9" height="9" rx="1" stroke="#ffffff" stroke-width="2" fill="none"/><path d="M6 6 V1 H15 V10 H10" stroke="#ffffff" stroke-width="2" fill="none"/></svg>
<div class="abs" style="left:90px;top:629.0px;font-size:14px;line-height:20px;color:#bfcbd9;font-weight:normal;white-space:nowrap;">仓库信息</div>
<svg class="abs" style="left:65px;top:630px" width="15" height="15" viewBox="0 0 15 15"><path d="M1.5 6.5 L7.5 1.5 L13.5 6.5 V13.8 H1.5 Z" stroke="#bfcbd9" stroke-width="1.3" fill="none" stroke-linejoin="round"/></svg>
<div class="abs" style="left:90px;top:679.0px;font-size:14px;line-height:20px;color:#bfcbd9;font-weight:normal;white-space:nowrap;">产品库存</div>
<svg class="abs" style="left:66px;top:680px" width="13" height="16" viewBox="0 0 13 16"><path d="M1 1 H12 V4 H1 Z M2 4 L3 15 H10 L11 4" stroke="#bfcbd9" stroke-width="1.3" fill="none" stroke-linejoin="round"/><path d="M1 6.5 H12" stroke="#bfcbd9" stroke-width="1.1"/></svg>
<div class="abs" style="left:90px;top:729.0px;font-size:14px;line-height:20px;color:#ffffff;font-weight:normal;white-space:nowrap;">出入库明细</div>
<svg class="abs" style="left:64px;top:731px" width="17" height="17" viewBox="0 0 14 14"><path d="M1.9 3.2 V9.6 A2.8 2.8 0 0 0 7.5 9.6 A2.6 2.6 0 0 0 5.6 7.1" stroke="#fff" stroke-width="2.2" fill="none" stroke-linecap="round"/><path d="M5.4 1.2 A7.3 7.3 0 0 1 12.6 7.9 M5.4 3.9 A4.6 4.6 0 0 1 9.9 8.1" stroke="#fff" stroke-width="1.6" fill="none" stroke-linecap="round"/></svg>
<div class="abs" style="left:0px;top:84px;width:199px;height:50px;background:#001529"></div>
<svg class="abs" style="left:8px;top:89px" width="40" height="40" viewBox="0 0 40 40"><rect width="40" height="40" fill="#2e211d"/><rect y="28" width="40" height="12" fill="#b07c60"/><rect y="27" width="40" height="2" fill="#7a4f3c"/><circle cx="35" cy="4" r="3" fill="#6a4a3a"/><circle cx="36" cy="14" r="3.5" fill="#5e3f30"/><circle cx="4" cy="24" r="2.5" fill="#6a4636"/><path d="M6 16 C8 10 12 6 17 4 C19 8 16 13 10 18 Z" fill="#5a5656"/><path d="M9 14 L13 9 L11 13 L15 11" stroke="#9a9a9a" stroke-width="1" fill="none"/><rect x="16" y="0" width="5" height="12" rx="2" fill="#e8e4e6"/><rect x="17.2" y="0" width="2.6" height="10" fill="#d98ca0"/><rect x="25" y="0" width="5" height="12" rx="2" fill="#e8e4e6"/><rect x="26.2" y="0" width="2.6" height="10" fill="#d98ca0"/><ellipse cx="21" cy="36" rx="9" ry="10" fill="#cfc0c3"/><ellipse cx="26" cy="34" rx="6" ry="7" fill="#c7c4c8"/><ellipse cx="21" cy="18.5" rx="13" ry="9.5" fill="#ededee"/><circle cx="15.8" cy="18" r="1.4" fill="#4a78a8"/><circle cx="22.2" cy="18" r="1.4" fill="#2f5f98"/><ellipse cx="17" cy="22.5" rx="1.5" ry="1" fill="#4a3a3a"/><path d="M12 26 H30" stroke="#d9c5c8" stroke-width="3"/></svg>
<div class="abs" style="left:59px;top:99.0px;font-size:16px;line-height:20px;color:#fff;font-weight:bold;white-space:nowrap;">芋道管理系统</div>
<div class="abs" style="left:48px;top:717px;width:120px;height:46px;border:3px solid #f2386f"></div>
<div class="abs" style="left:192px;top:449px;width:6px;height:340px;border-radius:3px;background:rgba(144,147,153,.3)"></div>
<div class="abs" style="left:199px;top:84px;width:1467px;height:50px;background:#fff"></div>
<div class="abs" style="left:199px;top:134px;width:1467px;height:1px;background:#e4e7ed"></div>
<svg class="abs" style="left:212px;top:104px" width="14" height="12" viewBox="0 0 14 12"><path d="M0 1 H14 M4.5 6 H14 M0 11 H14" stroke="#111" stroke-width="2"/><path d="M0 6 L3.5 3.8 V8.2 Z" fill="#111"/></svg>
<svg class="abs" style="left:247px;top:102px" width="15" height="15" viewBox="0 0 14 14"><path d="M2 0.5 H12 A1.5 1.5 0 0 1 13.5 2 V4.6 A1.7 1.7 0 0 1 10.2 4.6 A1.7 1.7 0 0 1 7 4.6 A1.7 1.7 0 0 1 3.8 4.6 A1.7 1.7 0 0 1 0.5 4.6 V2 A1.5 1.5 0 0 1 2 0.5 Z" fill="#303133"/><path d="M1.3 6.8 H12.7 V13.5 H1.3 Z M3.3 9.2 H10.7 V10.9 H3.3 Z" fill="#303133" fill-rule="evenodd"/></svg>
<div class="abs" style="left:266px;top:99.0px;font-size:14px;line-height:20px;color:#303133;font-weight:normal;white-space:nowrap;">ERP <b>系统</b></div>
<div class="abs" style="left:336px;top:99.0px;font-size:14px;line-height:20px;color:#c0c4cc;font-weight:normal;white-space:nowrap;">/</div>
<svg class="abs" style="left:351px;top:102px" width="15" height="15" viewBox="0 0 16 16"><rect x="1" y="6" width="9" height="9" rx="1" stroke="#303133" stroke-width="2" fill="none"/><path d="M6 6 V1 H15 V10 H10" stroke="#303133" stroke-width="2" fill="none"/></svg>
<div class="abs" style="left:370px;top:99.0px;font-size:14px;line-height:20px;color:#303133;font-weight:bold;white-space:nowrap;">库存管理</div>
<div class="abs" style="left:436px;top:99.0px;font-size:14px;line-height:20px;color:#c0c4cc;font-weight:normal;white-space:nowrap;">/</div>
<svg class="abs" style="left:451px;top:102px" width="15" height="15" viewBox="0 0 14 14"><path d="M1.9 3.2 V9.6 A2.8 2.8 0 0 0 7.5 9.6 A2.6 2.6 0 0 0 5.6 7.1" stroke="#606266" stroke-width="2.2" fill="none" stroke-linecap="round"/><path d="M5.4 1.2 A7.3 7.3 0 0 1 12.6 7.9 M5.4 3.9 A4.6 4.6 0 0 1 9.9 8.1" stroke="#606266" stroke-width="1.6" fill="none" stroke-linecap="round"/></svg>
<div class="abs" style="left:469px;top:99.0px;font-size:14px;line-height:20px;color:#606266;font-weight:normal;white-space:nowrap;">出入库明细</div>
<svg class="abs" style="left:1369px;top:102px" width="16" height="16" viewBox="0 0 16 16"><path d="M1.5 5.5 V1.5 H5.5 M10.5 1.5 H14.5 V5.5 M14.5 10.5 V14.5 H10.5 M5.5 14.5 H1.5 V10.5" stroke="#111" stroke-width="2.2" fill="none"/></svg>
<svg class="abs" style="left:1405px;top:101px" width="17" height="17" viewBox="0 0 17 17"><circle cx="7.8" cy="8" r="6.2" stroke="#222" stroke-width="1.4" fill="none"/><path d="M12.3 12.5 L15.5 15.7" stroke="#222" stroke-width="1.4"/></svg>
<svg class="abs" style="left:1442px;top:102px" width="17" height="14" viewBox="0 0 17 14"><path d="M0.5 1.5 H9.5 M5 1.5 V13 M8 5.5 H15.5 M11.8 5.5 V13" stroke="#444" stroke-width="2.2" fill="none"/></svg>
<svg class="abs" style="left:1480px;top:102px" width="18" height="16" viewBox="0 0 18 16"><path d="M6.6 0 V2.2 M1 2.4 H12 M4 4.8 C5 7 6.5 9 8.8 10.5 M10 4 C8.5 8 6 11 2.5 12.5" stroke="#555" stroke-width="1.6" fill="none"/><path d="M9 15 L12.5 5.5 L16 15 M10.2 12 H14.8" stroke="#555" stroke-width="1.6" fill="none"/></svg>
<svg class="abs" style="left:1518px;top:98px" width="18" height="18" viewBox="0 0 18 18"><path d="M2.5 14 H15.5 M4 14 V8.5 A5 5 0 0 1 14 8.5 V14" stroke="#222" stroke-width="1.4" fill="none"/><circle cx="9" cy="2.6" r="1" fill="#222"/><circle cx="9" cy="16.5" r="0.9" fill="#222"/></svg>
<svg class="abs" style="left:1556px;top:89px" width="40" height="40" viewBox="0 0 40 40"><defs><clipPath id="av"><circle cx="20" cy="20" r="20"/></clipPath></defs><g clip-path="url(#av)"><rect width="40" height="40" fill="#3f8fdc"/><rect width="40" height="7" fill="#0a0d14"/><rect y="7" width="40" height="5" fill="#4b97e0"/><path d="M0 22 C10 19 20 26 40 21 V40 H0 Z" fill="#1f63c0"/><path d="M0 26 C12 23 24 30 40 26 V40 H0 Z" fill="#2c74d2"/><path d="M0 33 L3 31 L5 32.5 L8 30.5 L10 32.5 L13 31 L16 32.5 L19 31 L22 32 L25 30.5 L28 32.5 L31 31 L34 32.5 L37 31 L40 32 V40 H0 Z" fill="#0a0d16"/><rect x="22.5" y="19" width="1.6" height="13" fill="#0a0d16"/><text x="6" y="20" font-size="7" fill="#2a2f8a" font-weight="bold">文 心</text><rect x="23" y="16" width="6" height="1.2" fill="#6a8fc0"/><rect x="31" y="13" width="7" height="7" fill="#7aa2c8"/></g></svg>
<div class="abs" style="left:1602px;top:99.0px;font-size:14px;line-height:20px;color:#606266;font-weight:normal;white-space:nowrap;">芋道源码</div>
<div class="abs" style="left:199px;top:135px;width:1467px;height:33px;background:#fff"></div>
<div class="abs" style="left:199px;top:168px;width:1467px;height:1px;background:#e4e7ed"></div>
<div class="abs" style="left:235px;top:135px;width:1px;height:33px;background:#e4e7ed"></div>
<svg class="abs" style="left:212px;top:145px" width="12" height="13" viewBox="0 0 12 13"><path d="M5.5 0.5 L1 6.5 L5.5 12.5 M10.5 0.5 L6 6.5 L10.5 12.5" stroke="#a8a8a8" stroke-width="1.1" fill="none"/></svg>
<div class="abs" style="left:239px;top:136px;width:66px;height:31px;background:#fff;border:1px solid #d8dce5;border-radius:3px"></div>
<div class="abs" style="left:256px;top:141.0px;font-size:12px;line-height:20px;color:#495060;font-weight:normal;white-space:nowrap;">首页</div>
<div class="abs" style="left:309px;top:136px;width:107px;height:31px;background:#fff;border:1px solid #d8dce5;border-radius:3px"></div>
<svg class="abs" style="left:322px;top:147px" width="14" height="8" viewBox="0 0 14 8"><path d="M2.5 4 H11.5" stroke="#333" stroke-width="2.2"/><circle cx="2" cy="2" r="1.8" fill="#333"/><circle cx="2" cy="6" r="1.8" fill="#333"/><circle cx="12" cy="2" r="1.8" fill="#333"/><circle cx="12" cy="6" r="1.8" fill="#333"/></svg>
<div class="abs" style="left:342px;top:141.0px;font-size:12px;line-height:20px;color:#495060;font-weight:normal;white-space:nowrap;">销售退货</div>
<div class="abs" style="left:420px;top:136px;width:107px;height:31px;background:#fff;border:1px solid #d8dce5;border-radius:3px"></div>
<div class="abs" style="left:434px;top:151px;width:10px;height:1.3px;background:#555"></div>
<div class="abs" style="left:453px;top:141.0px;font-size:12px;line-height:20px;color:#495060;font-weight:normal;white-space:nowrap;">采购退货</div>
<div class="abs" style="left:531px;top:136px;width:119px;height:31px;background:#409eff;border-radius:3px"></div>
<svg class="abs" style="left:543px;top:144px" width="14" height="14" viewBox="0 0 14 14"><path d="M1.9 3.2 V9.6 A2.8 2.8 0 0 0 7.5 9.6 A2.6 2.6 0 0 0 5.6 7.1" stroke="#fff" stroke-width="2.2" fill="none" stroke-linecap="round"/><path d="M5.4 1.2 A7.3 7.3 0 0 1 12.6 7.9 M5.4 3.9 A4.6 4.6 0 0 1 9.9 8.1" stroke="#fff" stroke-width="1.6" fill="none" stroke-linecap="round"/></svg>
<div class="abs" style="left:565px;top:141.0px;font-size:12px;line-height:20px;color:#fff;font-weight:normal;white-space:nowrap;">出入库明细</div>
<div class="abs" style="left:1562px;top:135px;width:1px;height:33px;background:#e4e7ed"></div>
<div class="abs" style="left:1597px;top:135px;width:1px;height:33px;background:#e4e7ed"></div>
<div class="abs" style="left:1632px;top:135px;width:1px;height:33px;background:#e4e7ed"></div>
<svg class="abs" style="left:1573px;top:145px" width="12" height="13" viewBox="0 0 12 13"><path d="M1.5 0.5 L6 6.5 L1.5 12.5 M6.5 0.5 L11 6.5 L6.5 12.5" stroke="#a8a8a8" stroke-width="1.1" fill="none"/></svg>
<svg class="abs" style="left:1607px;top:145px" width="15" height="14" viewBox="0 0 15 14"><path d="M13 7.5 A5.7 5.7 0 1 1 11.3 3.4" stroke="#9a9a9a" stroke-width="1.2" fill="none"/><path d="M9.5 1.5 L13.3 1.8 L12.6 5.4 Z" fill="#9a9a9a"/></svg>
<svg class="abs" style="left:1643px;top:146px" width="13" height="12" viewBox="0 0 13 12"><rect x="0" y="0" width="5.2" height="5" rx="0.8" fill="#9a9a9a"/><rect x="7" y="0" width="5.2" height="5" rx="0.8" fill="#9a9a9a"/><rect x="0" y="7" width="5.2" height="5" rx="0.8" fill="#9a9a9a"/><rect x="7" y="7" width="5.2" height="5" rx="0.8" fill="#9a9a9a"/></svg>
<div class="abs" style="left:1666px;top:84px;width:2px;height:692px;background:#777"></div>
<div class="abs" style="left:1668px;top:84px;width:1px;height:692px;background:#a5a5a5"></div>
<div class="abs" style="left:1665px;top:37px;width:2px;height:47px;background:#555"></div>
<div class="abs" style="left:1667px;top:0px;width:2px;height:84px;background:#1c1c1c"></div>
<div class="abs" style="left:0px;top:0px;width:1px;height:84px;background:#4d4d4d"></div>
</body></html>
